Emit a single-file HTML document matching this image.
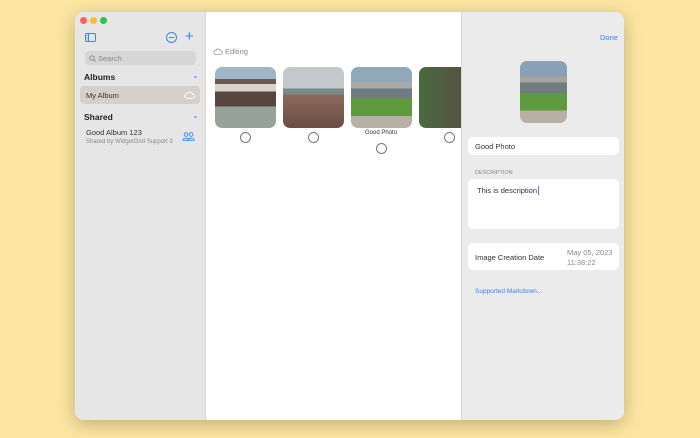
<!DOCTYPE html>
<html><head><style>
*{margin:0;padding:0;box-sizing:border-box}
body{width:700px;height:438px;background:#fde6a2;font-family:"Liberation Sans",sans-serif;position:relative;overflow:hidden}
.win{position:absolute;left:75px;top:12px;width:549px;height:408px;border-radius:9px;overflow:hidden;background:#fff;box-shadow:0 4px 18px rgba(0,0,0,.25)}
.side{position:absolute;left:0;top:0;width:131px;height:408px;background:#e7e6e6;border-right:1px solid #d4d4d4}
.right{position:absolute;left:386px;top:0;width:163px;height:408px;background:#ebebeb;border-left:1px solid #d8d8d8}
.a{position:absolute}
.dot{position:absolute;top:5px;width:7px;height:7px;border-radius:50%}
.ph{position:absolute;top:55px;width:61px;height:61px;border-radius:7px;overflow:hidden}
.c{position:absolute;width:11px;height:11px;border:1px solid #777;border-radius:50%}
.box{position:absolute;left:6px;width:151px;background:#fff;border-radius:5px}
</style></head><body>
<div class="win">
<div class="side">
 <div class="dot" style="left:5px;background:#fe5f57"></div>
 <div class="dot" style="left:15px;background:#febc2e"></div>
 <div class="dot" style="left:25px;background:#28c840"></div>
 <div class="a" style="left:10px;top:21px;width:11px;height:9px;border:1.3px solid #3b82f6;border-radius:2px"><div style="width:3px;height:100%;border-right:1.3px solid #3b82f6;background:#bcd4f8"></div></div>
 <div class="a" style="left:91px;top:20px;width:11px;height:11px;border:1.3px solid #3b82f6;border-radius:50%"><div style="position:absolute;left:2px;top:3.5px;width:5px;height:1.3px;background:#3b82f6"></div></div>
 <div class="a" style="left:110px;top:16px;color:#3b82f6;font-size:15px">+</div>
 <div class="a" style="left:10px;top:39px;width:111px;height:14px;background:#d6d6d6;border-radius:4px;font-size:7.5px;color:#888;padding:3px 0 0 13px">Search<svg style="position:absolute;left:4px;top:3.5px" width="7" height="7" viewBox="0 0 7 7"><circle cx="3" cy="3" r="2.2" fill="none" stroke="#888" stroke-width="0.9"/><path d="M4.6 4.6L6.5 6.5" stroke="#888" stroke-width="0.9"/></svg></div>
 <div class="a" style="left:9px;top:60px;font-size:8.5px;font-weight:bold;color:#222">Albums</div>
 <div class="a" style="left:117px;top:59px;font-size:8px;color:#3b82f6">⌄</div>
 <div class="a" style="left:5px;top:74px;width:120px;height:18px;background:#d5d0cc;border-radius:4px;font-size:7.5px;color:#333;padding:5px 0 0 6px">My Album<svg style="position:absolute;right:5px;top:5px" width="11" height="8" viewBox="0 0 11 8"><path d="M2.5 7.3H8.6A2 2 0 0 0 8.6 3.3A3 3 0 0 0 3 2.8A2.3 2.3 0 0 0 2.5 7.3Z" fill="none" stroke="#fff" stroke-width="0.9"/></svg></div>
 <div class="a" style="left:9px;top:100px;font-size:8.5px;font-weight:bold;color:#222">Shared</div>
 <div class="a" style="left:117px;top:99px;font-size:8px;color:#3b82f6">⌄</div>
 <div class="a" style="left:11px;top:116px;font-size:7.5px;color:#333">Good Album 123</div>
 <div class="a" style="left:11px;top:127px;font-size:6px;color:#888">Shared by WidgetGrid Support 3</div>
 <svg class="a" style="left:107px;top:120px" width="13" height="9" viewBox="0 0 13 9"><circle cx="4" cy="2.5" r="1.8" fill="none" stroke="#3b82f6" stroke-width="0.9"/><circle cx="9" cy="2.5" r="1.8" fill="none" stroke="#3b82f6" stroke-width="0.9"/><path d="M0.7 8.3C0.7 5.5 7.3 5.5 7.3 8.3Z M5.7 8.3C5.7 5.5 12.3 5.5 12.3 8.3Z" fill="none" stroke="#3b82f6" stroke-width="0.9"/></svg>
</div>
<svg class="a" style="left:138px;top:36px" width="10" height="7" viewBox="0 0 11 8"><path d="M2.5 7.3H8.6A2 2 0 0 0 8.6 3.3A3 3 0 0 0 3 2.8A2.3 2.3 0 0 0 2.5 7.3Z" fill="none" stroke="#999" stroke-width="0.9"/></svg>
<div class="a" style="left:150px;top:35px;font-size:7.5px;color:#888">Editing</div>
<div class="ph" style="left:140px;background:linear-gradient(#9fb6c8 0 20%,#6a5a50 20% 28%,#d8d4cc 28% 40%,#584540 40% 65%,#98a29c 65%)"></div>
<div class="ph" style="left:208px;background:linear-gradient(#c4c8cc 0 35%,#7a8a88 35% 45%,#8a6a5c 45%,#6a4e42)"></div>
<div class="ph" style="left:276px;background:linear-gradient(#90a8b8 0 25%,#a8a8a8 25% 35%,#707c80 35% 52%,#5f9a3c 52% 80%,#b8b0a4 80%)"></div>
<div class="ph" style="left:344px;background:linear-gradient(90deg,#4a6a40,#5a4a44)"></div>
<div class="c" style="left:165px;top:120px"></div>
<div class="c" style="left:233px;top:120px"></div>
<div class="a" style="left:290px;top:118px;font-size:6px;color:#333">Good Photo</div>
<div class="c" style="left:301px;top:131px"></div>
<div class="c" style="left:369px;top:120px"></div>
<div class="right">
 <div class="a" style="left:138px;top:21px;font-size:7.5px;color:#3b82f6">Done</div>
 <div class="a" style="left:58px;top:49px;width:47px;height:62px;border-radius:7px;background:linear-gradient(#8aa0b6 0 25%,#a4a4a4 25% 35%,#707c80 35% 52%,#5f9a3c 52% 80%,#b8b0a4 80%)"></div>
 <div class="box" style="top:125px;height:18px;font-size:7.5px;color:#333;padding:5px 0 0 7px">Good Photo</div>
 <div class="a" style="left:13px;top:158px;font-size:5.5px;color:#888">DESCRIPTION</div>
 <div class="box" style="top:167px;height:50px;font-size:7.5px;color:#333;padding:7px 0 0 9px">This is description<span style="border-left:1px solid #3b82f6;margin-left:1px"></span></div>
 <div class="box" style="top:231px;height:27px;font-size:7.5px;color:#333;padding:10px 0 0 7px">Image Creation Date<div style="position:absolute;left:99px;top:5px;color:#888;font-size:7.5px;line-height:10px">May 05, 2023<br>11:38:22</div></div>
 <div class="a" style="left:13px;top:276px;font-size:6.5px;color:#3b82f6">Supported Markdown...</div>
</div>
</div>
</body></html>
